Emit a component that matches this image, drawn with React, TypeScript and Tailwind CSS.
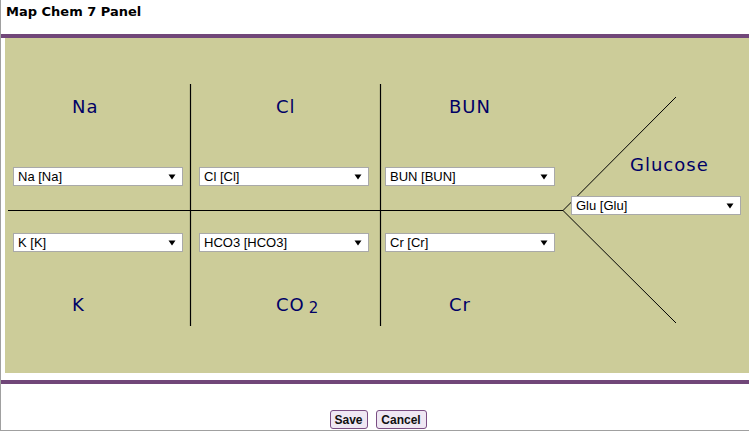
const labelCls =
  "h-[24px] leading-[24px] text-[18px] tracking-[1px] text-[#000066] font-['DejaVu_Sans',Verdana,sans-serif]";

const Pick = ({ value }: { value: string }) => (
  <div className="flex h-[19px] w-[170px] items-center justify-between border border-[#a9a9a9] bg-white pl-[4px] pr-[6px] text-[13px] leading-none text-black font-['Liberation_Sans',Arial,sans-serif]">
    <span>{value}</span>
    <svg width="8" height="6" viewBox="0 0 8 6">
      <path d="M0.5 0.5 H7.5 L4 5.5 Z" fill="#000" />
    </svg>
  </div>
);

type Col = {
  top: string;
  topMl: string;
  top2?: React.ReactNode;
  first: string;
  second: string;
  bottom: React.ReactNode;
  bottomMl: string;
};

const cols: Col[] = [
  { top: "Na", topMl: "ml-[59px]", first: "Na [Na]", second: "K [K]", bottom: "K", bottomMl: "ml-[59px]" },
  {
    top: "Cl",
    topMl: "ml-[77px]",
    first: "Cl [Cl]",
    second: "HCO3 [HCO3]",
    bottom: (
      <>
        CO<sub className="relative top-[2px] ml-[4px] align-baseline text-[15px]">2</sub>
      </>
    ),
    bottomMl: "ml-[77px]",
  },
  { top: "BUN", topMl: "ml-[64px]", first: "BUN [BUN]", second: "Cr [Cr]", bottom: "Cr", bottomMl: "ml-[64px]" },
];

const Fishbone = () => (
  <svg className="pointer-events-none absolute inset-0" width="744" height="335">
    <line x1="3" y1="172.5" x2="558" y2="172.5" stroke="#000" strokeWidth="1.2" />
    <line x1="185.5" y1="46" x2="185.5" y2="288" stroke="#000" strokeWidth="1.2" />
    <line x1="375.5" y1="46" x2="375.5" y2="288" stroke="#000" strokeWidth="1.2" />
    <line x1="558" y1="172.5" x2="671" y2="59" stroke="#000" strokeWidth="1" />
    <line x1="558" y1="172.5" x2="671" y2="285" stroke="#000" strokeWidth="1" />
  </svg>
);

export default function App() {
  return (
    <div className="flex h-[431px] w-[749px] flex-col border-b border-l border-[#a0a0a0] bg-white">
      <div className="h-[34px] pl-[5px] pt-[4px] text-[13px] font-bold leading-[16px] text-black font-['DejaVu_Sans',Verdana,sans-serif]">
        Map Chem 7 Panel
      </div>
      <div className="h-[4px] bg-[#714779]" />
      <div className="relative ml-[4px] h-[335px] bg-[#cccc99]">
        <Fishbone />
        <div className="relative flex pl-[8px]">
          {cols.map((c) => (
            <div key={c.top} className="flex w-[186px] flex-col">
              <div className={`${labelCls} ${c.topMl} mt-[57px]`}>{c.top}</div>
              <div className="mt-[48px]">
                <Pick value={c.first} />
              </div>
              <div className="mt-[47px]">
                <Pick value={c.second} />
              </div>
              <div className={`${labelCls} ${c.bottomMl} mt-[41px]`}>{c.bottom}</div>
            </div>
          ))}
          <div className="flex w-[170px] flex-col">
            <div className={`${labelCls} ml-[59px] mt-[115px]`}>Glucose</div>
            <div className="mt-[19px]">
              <Pick value="Glu [Glu]" />
            </div>
          </div>
        </div>
      </div>
      <div className="mt-[7px] h-[4px] bg-[#714779]" />
      <div className="mt-[26px] flex justify-center gap-[8px] pl-[6px]">
        <button className="h-[19px] w-[38px] rounded-[3px] border border-[#7a4d83] bg-[#efe7f3] text-[12px] font-bold leading-none text-[#111] font-['Liberation_Sans',Arial,sans-serif]">
          Save
        </button>
        <button className="h-[19px] w-[51px] rounded-[3px] border border-[#7a4d83] bg-[#efe7f3] text-[12px] font-bold leading-none text-[#111] font-['Liberation_Sans',Arial,sans-serif]">
          Cancel
        </button>
      </div>
    </div>
  );
}
